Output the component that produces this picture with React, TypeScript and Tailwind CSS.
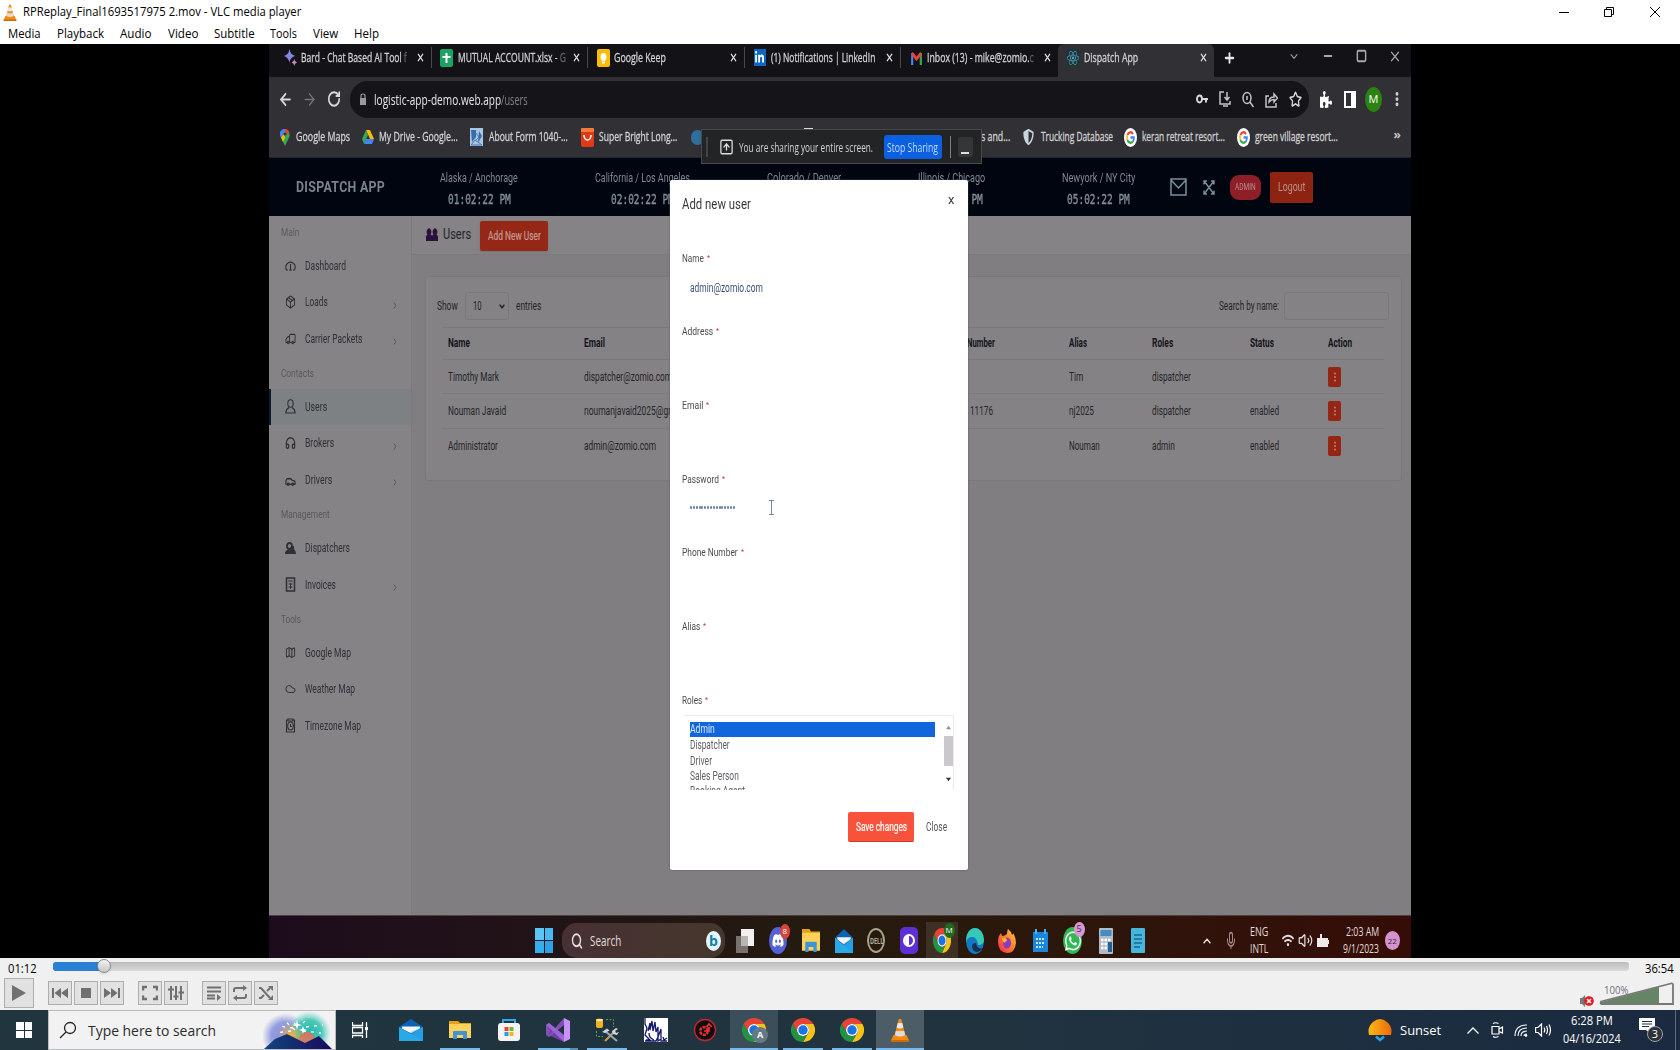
import React, { useLayoutEffect, useRef } from "react";
import {
  Gauge, Package, Truck, Headphones, Car, ChevronRight, ChevronDown,
  ChevronUp, ArrowLeft, ArrowRight, RotateCw, Star, X, Minus, Plus, Square, Search, Mic,
  Volume2, EllipsisVertical, SquareArrowUp, Map, Cloud,
} from "lucide-react";
import { FaPuzzlePiece, FaDiscord, FaWhatsapp, FaWifi, FaReact, FaLinkedinIn, FaShieldAlt, FaFirefoxBrowser } from "react-icons/fa";

/* Text squeezed or stretched horizontally to fill the width of its box. */
function Fit({ c = "", children }: { c?: string; children: React.ReactNode }) {
  const box = useRef<HTMLDivElement>(null);
  const txt = useRef<HTMLSpanElement>(null);
  useLayoutEffect(() => {
    if (box.current && txt.current && txt.current.offsetWidth) {
      txt.current.style.transform = `scaleX(${box.current.clientWidth / txt.current.offsetWidth})`;
    }
  });
  return (
    <div ref={box} className={"shrink-0 whitespace-nowrap " + c}>
      <span ref={txt} className="inline-block origin-left">{children}</span>
    </div>
  );
}

const stretch = { preserveAspectRatio: "none" };

function Chrome({ c }: { c: string }) {
  const d = "M1.6 6A12 12 0 0 1 22.4 6L12 6A6 6 0 0 0 6.8 15Z";
  return (
    <svg viewBox="0 0 24 24" className={c} preserveAspectRatio="none">
      <path d={d} fill="#ea4335" />
      <path d={d} fill="#fbc116" transform="rotate(120 12 12)" />
      <path d={d} fill="#229342" transform="rotate(240 12 12)" />
      <circle cx="12" cy="12" r="6" fill="#fff" />
      <circle cx="12" cy="12" r="4.7" fill="#1a73e8" />
    </svg>
  );
}

function Cone({ c }: { c: string }) {
  return (
    <svg viewBox="0 0 24 24" className={c} preserveAspectRatio="none">
      <path d="M4 17H20L23 23H1Z" fill="#f08a10" />
      <path d="M1 22H23V24H1Z" fill="#c96a06" />
      <path d="M10.5 1H13.5L19 19Q12 23 5 19Z" fill="#f58a14" />
      <path d="M9.3 5H14.7L16 9.5Q12 11.3 8 9.5Z" fill="#e9e9e9" />
      <path d="M7 13H17L18.3 17Q12 20 5.7 17Z" fill="#dcdcdc" />
    </svg>
  );
}

function Envelope({ c }: { c: string }) {
  return (
    <svg viewBox="0 0 24 22" className={c} preserveAspectRatio="none">
      <path d="M0 8L12 0L24 8V12H0Z" fill="#0a63b5" />
      <path d="M0 8L12 15L24 8V22H0Z" fill="#2aa9ea" />
      <path d="M3 7.500H21V9.500L12 14.500L3 9.500Z" fill="#f4f6f8" />
      <path d="M24 22L10 13.500L24 8Z" fill="#1490df" opacity=".35" />
    </svg>
  );
}

function Folder({ c }: { c: string }) {
  return (
    <svg viewBox="0 0 22 18" className={c} preserveAspectRatio="none">
      <path d="M0 0H9L11 2H22V8H0Z" fill="#e2a30c" />
      <path d="M0 3H22V17H0Z" fill="#ffd05a" />
      <path d="M4 18V11Q4 10 5 10H17Q18 10 18 11V18H14V14H8V18Z" fill="#3e94d8" />
    </svg>
  );
}

function GoogleG() {
  return (
    <svg viewBox="0 0 24 24" className="h-[19px] w-[13px] shrink-0" preserveAspectRatio="none">
      <circle cx="12" cy="12" r="12" fill="#fff" />
      <g fill="none" strokeWidth="3">
        <path d="M16.8 7.5A6.5 6.5 0 0 0 6.2 9" stroke="#ea4335" />
        <path d="M6.2 9A6.5 6.5 0 0 0 6.2 15" stroke="#fbbc05" />
        <path d="M6.2 15A6.5 6.5 0 0 0 16.4 17" stroke="#34a853" />
        <path d="M16.4 17A6.5 6.5 0 0 0 18.4 12H12" stroke="#4285f4" />
      </g>
    </svg>
  );
}

function TabItem({ icon, label, active, lead }: { icon: React.ReactNode; label: React.ReactNode; active?: boolean; lead?: boolean }) {
  return (
    <div className={"flex h-[33px] w-[156.5px] shrink-0 items-center pl-2 pr-[6px] pb-1.5 " + (active ? "rounded-t-md bg-[#313034]" : "")}>
      <div className="flex w-[14px] shrink-0 items-center justify-center">{icon}</div>
      <div className="ml-[4px] flex-1 overflow-hidden">{label}</div>
      <X className="h-[13px] w-[9px] shrink-0 text-[#e4e4e6]" strokeWidth={3} {...stretch} />
      {!active && !lead && <div className="ml-[6px] -mr-[6px] h-[21px] w-px shrink-0 bg-[#48474b]" />}
    </div>
  );
}

function BrowserTabs() {
  const t = "h-[18px] text-[12.5px] leading-[18px] text-[#d2d2d5] [-webkit-text-stroke:0.3px_#d2d2d5] ";
  return (
    <div className="flex h-[33px] items-start bg-[#131217] pl-[6px]">
      <TabItem
        icon={<svg viewBox="0 0 24 24" className="h-[17px] w-[13px]" preserveAspectRatio="none"><path d="M10 0Q11.500 8 20 10Q11.500 12 10 20Q8.500 12 0 10Q8.500 8 10 0Z" fill="#8a83d8" /><path d="M10 0Q11.500 8 20 10H10Z" fill="#6d92e6" /><path d="M19 14Q19.5 18 24 19Q19.500 20 19 24Q18.500 20 14 19Q18.500 18 19 14Z" fill="#c58bc0" /></svg>}
        label={<Fit c={t + "w-[106px]"}>Bard - Chat Based AI Tool <span className="opacity-40">f</span></Fit>}
      />
      <TabItem
        icon={<svg viewBox="0 0 13 18" className="h-[18px] w-[13px]"><rect width="13" height="18" rx="2" fill="#1ca261" /><path d="M6.5 4V14M2.5 8H10.5" stroke="#fff" strokeWidth="2" /></svg>}
        label={<Fit c={t + "w-[108px]"}>MUTUAL ACCOUNT.xlsx - <span className="opacity-40">G</span></Fit>}
      />
      <TabItem
        icon={<svg viewBox="0 0 13 18" className="h-[18px] w-[13px]"><rect width="13" height="18" rx="2" fill="#fbbc04" /><ellipse cx="6.5" cy="8" rx="3" ry="4" fill="#fff" /><rect x="5" y="12.5" width="3" height="2" fill="#fff" /></svg>}
        label={<Fit c={t + "w-[52px]"}>Google Keep</Fit>}
      />
      <TabItem
        icon={<div className="flex h-[17px] w-[12px] items-center justify-center bg-[#0a66c2]"><FaLinkedinIn className="h-[13px] w-[9px] text-white" {...stretch} /></div>}
        label={<Fit c={t + "w-[104px]"}>(1) Notifications | LinkedIn</Fit>}
      />
      <TabItem
        lead
        icon={<svg viewBox="0 0 12 14" className="h-[14px] w-[11px]" preserveAspectRatio="none"><path d="M1.3 14V2" stroke="#4285f4" strokeWidth="2.4" /><path d="M10.7 14V2" stroke="#34a853" strokeWidth="2.4" /><path d="M1 2L6 8L11 2" fill="none" stroke="#ea4335" strokeWidth="2.8" /></svg>}
        label={<Fit c={t + "w-[107px]"}>Inbox (13) - mike@zomio.<span className="opacity-40">c</span></Fit>}
      />
      <TabItem active icon={<div className="flex h-[17px] w-3 items-center justify-center bg-[#20323a]"><FaReact className="h-4 w-3 text-[#4fa9b8]" {...stretch} /></div>} label={<Fit c={t + "w-[54px]"}>Dispatch App</Fit>} />
      <div className="flex h-7 flex-1 items-center text-[#a8a8ab]">
        <Plus className="ml-[9px] h-[16px] w-[13px] text-[#e8e8ea]" strokeWidth={3.4} {...stretch} />
        <ChevronDown className="ml-[52px] mb-1 h-[15px] w-3" {...stretch} />
        <Minus className="mb-1 ml-[22px] h-[16px] w-3" strokeWidth={3} {...stretch} />
        <Square className="mb-1 ml-[22px] h-[14px] w-[11px]" strokeWidth={3.2} {...stretch} />
        <X className="mb-1 ml-[21px] h-[17px] w-[14px]" {...stretch} />
      </div>
    </div>
  );
}

function Toolbar() {
  const o = { fill: "none", stroke: "#c4c4c7", strokeWidth: 1.5 };
  return (
    <div className="flex h-[44px] items-center bg-[#313034] text-[#dadadc]">
      <ArrowLeft className="ml-[9px] h-[19px] w-[15px] shrink-0" strokeWidth={2.6} {...stretch} />
      <ArrowRight className="ml-[9px] h-[19px] w-[15px] shrink-0 text-[#77767a]" {...stretch} />
      <RotateCw className="ml-[10px] h-[18px] w-[14px] shrink-0" strokeWidth={2.8} {...stretch} />
      <div className="ml-[9px] flex h-[37px] w-[959px] shrink-0 items-center rounded-[18px] bg-[#151419] pl-[9px]">
        <svg viewBox="0 0 8 13" className="h-[13px] w-2"><path d="M1 5H7V12H1Z" fill="#9a9a9e" /><path d="M2 5V3Q2 1 4 1Q6 1 6 3V5" fill="none" stroke="#9a9a9e" strokeWidth="1.200" /></svg>
        <Fit c="mt-[2px] ml-[7px] h-5 w-[127px] text-[14px] leading-5 text-[#e6e6e8]">logistic-app-demo.web.app</Fit>
        <Fit c="mt-[2px] h-5 w-[27px] text-[14px] leading-5 text-[#828186]">/users</Fit>
        <div className="ml-auto mr-[7px] flex items-center gap-[11px]">
          <svg viewBox="0 0 12 10" className="h-[10px] w-3"><ellipse cx="3.500" cy="5" rx="2.500" ry="3.500" fill="none" stroke="#dadadc" strokeWidth="1.900" /><path d="M6 5H12M10 5V8.500" stroke="#dadadc" strokeWidth="2" fill="none" /></svg>
          <svg viewBox="0 0 12 16" className="h-4 w-3"><path d="M5 1H1V13H11V10M4 15H9M8 1V8M5.500 6L8 9L10.500 6" {...o} /></svg>
          <svg viewBox="0 0 12 17" className="h-[17px] w-3"><ellipse cx="5" cy="7" rx="4" ry="5.500" {...o} /><path d="M8 11L11.500 16M5 5V9" {...o} /></svg>
          <svg viewBox="0 0 13 17" className="h-[17px] w-[13px]"><path d="M4 5H1V16H11V12M4 11Q4 6 9 6V3L12.500 7L9 11V8.500Q6 8.500 4 11Z" {...o} /></svg>
          <Star className="h-[17px] w-[13px]" strokeWidth={2.4} {...stretch} />
        </div>
      </div>
      <FaPuzzlePiece className="ml-[11px] h-[17px] w-[12px] shrink-0 text-white" {...stretch} />
      <div className="ml-3 h-[17px] w-[12px] shrink-0 border-2 border-r-[5px] border-white" />
      <div className="ml-[9px] flex h-[25px] w-[17px] shrink-0 items-center justify-center rounded-[50%] bg-[#2c8212] text-[11px] text-white">M</div>
      <EllipsisVertical className="ml-[8px] h-[18px] w-[14px]" strokeWidth={3} {...stretch} />
    </div>
  );
}

function Bookmarks() {
  const t = "h-[18px] text-[12.5px] leading-[18px] text-[#d2d2d5] [-webkit-text-stroke:0.3px_#d2d2d5] ";
  return (
    <div className="flex h-[36px] items-center bg-[#313034] pb-[4px]">
      <svg viewBox="0 0 10 17" className="ml-[11px] h-[17px] w-[10px]"><path d="M5 17L1 8.5A4.6 4.8 0 1 1 9 8.5Z" fill="#34a853" /><path d="M1 8A4.6 4.8 0 0 1 5 0V5Z" fill="#4285f4" /><path d="M5 0A4.6 4.8 0 0 1 9.4 4L5 6Z" fill="#ea4335" /><path d="M1 8.5L4 5L5 9L3 13Z" fill="#fbbc04" /><circle cx="5" cy="5" r="1.5" fill="#333" /></svg>
      <Fit c={t + "ml-[6px] w-[54px]"}>Google Maps</Fit>
      <svg viewBox="0 0 12 14" className="ml-[12px] h-[14px] w-[12px]"><path d="M4 0H8L12 9H8Z" fill="#fbbc04" /><path d="M4 0L0 9L2 14L6 5Z" fill="#34a853" /><path d="M4 9H12L10 14H2Z" fill="#4285f4" /></svg>
      <Fit c={t + "ml-[5px] w-[79px]"}>My Drive - Google...</Fit>
      <svg viewBox="0 0 13 18" className="ml-[12px] h-[18px] w-[13px]"><rect width="13" height="18" fill="#a9c6e2" /><path d="M1 2H6V9L2 14ZM9 3L12 8L8 15Z" fill="#3a6da8" /><path d="M1 17L5 12L12 17ZM6 5L9 9L6 12" stroke="#497bb2" fill="none" /></svg>
      <Fit c={t + "ml-[6px] w-[79px]"}>About Form 1040-...</Fit>
      <svg viewBox="0 0 13 19" className="ml-[13px] h-[19px] w-[13px]"><rect width="13" height="19" rx="2" fill="#e23a14" /><rect width="13" height="4" rx="1" fill="#f27c3a" /><path d="M3 7A3.5 5 0 0 0 10 7" stroke="#fff" strokeWidth="1.6" fill="none" /></svg>
      <Fit c={t + "ml-[5px] w-[78px]"}>Super Bright Long...</Fit>
      <div className="ml-[14px] h-[15px] w-[13px] rounded-full bg-[#2f6f9c]" />
      <Fit c={t + "ml-[277px] w-[29px]"}>s and...</Fit>
      <FaShieldAlt className="ml-[13px] h-[16px] w-[11px] text-[#c9d5de]" {...stretch} />
      <Fit c={t + "ml-[7px] w-[72px]"}>Trucking Database</Fit>
      <div className="ml-[11px]"><GoogleG /></div>
      <Fit c={t + "ml-[5px] w-[83px]"}>keran retreat resort...</Fit>
      <div className="ml-[12px]"><GoogleG /></div>
      <Fit c={t + "ml-[5px] w-[83px]"}>green village resort...</Fit>
      <span className="ml-auto mr-[10px] pb-1 text-[12px] font-bold text-[#c4c4c7]">»</span>
    </div>
  );
}

function Zone({ c, name, nameW, time }: { c: string; name: string; nameW: string; time: string }) {
  return (
    <div className={"flex shrink-0 flex-col items-center " + c}>
      <Fit c={"mt-[2px] h-[18px] text-[12px] leading-[18px] text-[#7d8a94] " + nameW}>{name}</Fit>
      <Fit c="mt-[3px] h-[18px] w-[63px] font-['DejaVu_Sans_Mono',monospace] text-[14px] leading-[18px] text-[#7f8c94] [-webkit-text-stroke:0.4px_#7f8c94]">{time}</Fit>
    </div>
  );
}

function AppHeader() {
  return (
    <div className="flex h-[59px] items-center border-t border-[#1d2830] bg-[#000510]">
      <Fit c="ml-[27px] h-5 w-[89px] text-[15px] font-bold leading-5 tracking-wide text-[#79838b]">DISPATCH APP</Fit>
      <Zone c="ml-[34px] w-[120px]" name="Alaska / Anchorage" nameW="w-[78px]" time="01:02:22 PM" />
      <Zone c="ml-[43px] w-[120px]" name="California / Los Angeles" nameW="w-[95px]" time="02:02:22 PM" />
      <Zone c="ml-[42px] w-[120px]" name="Colorado / Denver" nameW="w-[74px]" time="03:02:22 PM" />
      <Zone c="ml-[27px] w-[120px]" name="Illinois / Chicago" nameW="w-[67px]" time="04:02:22 PM" />
      <Zone c="ml-[27px] w-[120px]" name="Newyork / NY City" nameW="w-[73px]" time="05:02:22 PM" />
      <svg viewBox="0 0 17 18" className="ml-[12px] h-[18px] w-[17px] shrink-0"><path d="M1 1H16V17H1ZM1 2L8.500 10L16 2" fill="none" stroke="#78909c" strokeWidth="1.500" /></svg>
      <svg viewBox="0 0 12 15" className="ml-[16px] h-[15px] w-[12px] shrink-0"><path d="M1 4.500V1H4M8 1H11V4.500M11 10.500V14H8M4 14H1V10.500M1.500 1.500L10.500 13.500M10.500 1.500L1.500 13.500" fill="none" stroke="#78909c" strokeWidth="1.400" /></svg>
      <div className="ml-[15px] flex h-[25px] w-[31px] shrink-0 items-center justify-center rounded-[9px] bg-[#8f1f26]"><Fit c="h-3 w-[21px] text-[9px] leading-3 text-[#b98d92]">ADMIN</Fit></div>
      <div className="ml-[9px] flex h-[31px] w-[43px] shrink-0 items-center justify-center rounded-[2px] bg-[#8d2412]"><Fit c="h-4 w-[27px] text-[12px] leading-4 text-[#b99088]">Logout</Fit></div>
    </div>
  );
}

const ic = "h-[14px] w-[11px] shrink-0";
const line = { fill: "none", stroke: "currentColor", strokeWidth: 1.1 };
type Nav = { head?: string; w: string; label?: string; icon?: React.ReactNode; arrow?: boolean; on?: boolean };
const nav: Nav[] = [
  { head: "Main", w: "w-[18px]" },
  { label: "Dashboard", w: "w-[41px]", icon: <svg viewBox="0 0 11 10" className="h-[10px] w-[11px] shrink-0"><path d="M3 9H1.500Q-.5 4 3 2Q5.500 .3 8 2Q11.500 4 9.500 9H8M5.500 3V9M4 9H7" {...line} /></svg> },
  { label: "Loads", w: "w-[23px]", icon: <Package className={ic} {...stretch} />, arrow: true },
  { label: "Carrier Packets", w: "w-[57px]", icon: <Truck className={ic + " -scale-x-100"} {...stretch} />, arrow: true },
  { head: "Contacts", w: "w-[33px]" },
  { label: "Users", w: "w-[22px]", icon: <svg viewBox="0 0 11 15" className="h-[15px] w-[11px] shrink-0"><ellipse cx="5.500" cy="4.500" rx="2.700" ry="3.800" {...line} /><path d="M4 8.500Q1 10 .8 14H10.200Q10 10 7 8.500" {...line} /></svg>, on: true },
  { label: "Brokers", w: "w-[29px]", icon: <Headphones className={ic} strokeWidth={2.6} {...stretch} />, arrow: true },
  { label: "Drivers", w: "w-[27px]", icon: <Car className="mt-1 h-[13px] w-[11px] shrink-0" strokeWidth={2.6} {...stretch} />, arrow: true },
  { head: "Management", w: "w-[49px]" },
  { label: "Dispatchers", w: "w-[45px]", icon: <svg viewBox="0 0 11 13" className="h-[13px] w-[11px] shrink-0"><ellipse cx="4.500" cy="4" rx="2.500" ry="3" fill="none" stroke="currentColor" strokeWidth="1.800" /><path d="M0 12Q0 7.500 4.500 7.500L6.500 4H9V7Q11 9 11 12Z" fill="currentColor" /></svg> },
  { label: "Invoices", w: "w-[31px]", icon: <svg viewBox="0 0 11 15" className="h-[15px] w-[11px] shrink-0"><path d="M1.500 1H9.500V14H1.500Z" fill="none" stroke="currentColor" strokeWidth="1.500" /><path d="M3 4H8M3.500 7H7.500M5.500 6V12M3.500 10H7.500" stroke="currentColor" /></svg>, arrow: true },
  { head: "Tools", w: "w-[20px]" },
  { label: "Google Map", w: "w-[46px]", icon: <Map className="h-[13px] w-[11px] shrink-0" {...stretch} /> },
  { label: "Weather Map", w: "w-[50px]", icon: <Cloud className="h-[12px] w-[11px] shrink-0" {...stretch} /> },
  { label: "Timezone Map", w: "w-[56px]", icon: <svg viewBox="0 0 11 15" className="h-[15px] w-[11px] shrink-0"><path d="M3 2H1.500V14H9.500V2H8M3 1H8V3H3Z" {...line} /><ellipse cx="5.500" cy="8" rx="2.800" ry="4" {...line} /><path d="M5.500 6V8.500H7" {...line} /></svg> },
];

function Sidebar() {
  return (
    <div className="w-[143px] shrink-0 border-r border-[#7b797c] bg-[#858386]">
      {nav.map((n, i) =>
        n.head ? (
          <div key={i} className="flex h-[31.6px] items-center pl-3">
            <Fit c={"h-4 text-[11.5px] leading-4 text-[#5a595c] " + n.w}>{n.head}</Fit>
          </div>
        ) : (
          <div key={i} className={"flex h-[36.5px] items-center text-[#2e3036] " + (n.on ? "border-l-2 border-[#0c1d30] bg-[#7d8183] pl-[14px]" : "pl-4")}>
            {n.icon}
            <Fit c={"ml-[9px] h-[18px] text-[13px] leading-[18px] " + n.w}>{n.label}</Fit>
            {n.arrow && <ChevronRight className="ml-auto mr-[12px] mt-1.5 h-[11px] w-[8px] text-[#4c4c50]" {...stretch} />}
          </div>
        )
      )}
    </div>
  );
}

const rows = [
  [["Timothy Mark", "w-[51px]"], ["dispatcher@zomio.com", "w-[88px]"], ["", "w-0"], ["Tim", "w-[14px]"], ["dispatcher", "w-[39px]"], ["", "w-0"]],
  [["Nouman Javaid", "w-[58px]"], ["noumanjavaid2025@gmail.com", "w-[119px]"], ["11176", "ml-[27px] w-[23px]"], ["nj2025", "w-[25px]"], ["dispatcher", "w-[39px]"], ["enabled", "w-[29px]"]],
  [["Administrator", "w-[50px]"], ["admin@zomio.com", "w-[72px]"], ["", "w-0"], ["Nouman", "w-[31px]"], ["admin", "w-[23px]"], ["enabled", "w-[29px]"]],
];
const heads = [["Name", "w-[22px]"], ["Email", "w-[21px]"], ["Phone Number", "w-[52px]"], ["Alias", "w-[18px]"], ["Roles", "w-[21px]"], ["Status", "w-[24px]"], ["Action", "w-[24px]"]];
const grid = "grid grid-cols-[136px_359px_126px_83px_98px_78px_56px] items-center pl-[6px]";

function UsersPage() {
  return (
    <div className="flex-1 bg-[#807e81]">
      <div className="flex h-[39px] items-start border-b border-[#7b797c] bg-[#858386] pl-[14px]">
        <svg viewBox="0 0 12 14" className="mt-[11px] h-[14px] w-[12px]"><path d="M0 14V9L1.500 7.500A2.300 3.400 0 1 1 4.500 7.500L6 8.500L7.500 7.500A2.300 3.400 0 1 1 10.500 7.500L12 9V14Z" fill="#2a123c" /></svg>
        <Fit c="ml-[5px] mt-[8px] h-5 w-[28px] text-[15px] leading-5 text-[#242428]">Users</Fit>
        <div className="ml-[9px] mt-[5px] flex h-[30px] w-[68px] items-center justify-center rounded-[2px] bg-[#952716] shadow">
          <Fit c="h-4 w-[53px] text-[12px] leading-4 text-[#c39d96] [-webkit-text-stroke:0.2px_#c39d96]">Add New User</Fit>
        </div>
      </div>
      <div className="ml-[13px] mt-[21px] h-[205px] w-[977px] rounded-[3px] border border-[#7a787b] bg-[#848285] pt-[15px] text-[#252528]">
        <div className="flex h-[28px] items-center pl-[11px] text-[12px]">
          <Fit c="h-4 w-[21px] leading-4">Show</Fit>
          <div className="ml-[7px] flex h-[28px] w-[44px] items-center rounded-[3px] border border-[#7a787c] pl-[7px]">
            <Fit c="h-4 w-[9px] leading-4">10</Fit>
            <ChevronDown className="ml-auto mr-[2px] h-[11px] w-[8px]" strokeWidth={4} {...stretch} />
          </div>
          <Fit c="ml-[7px] h-4 w-[25px] leading-4">entries</Fit>
          <Fit c="ml-auto h-4 w-[60px] leading-4">Search by name:</Fit>
          <div className="ml-[5px] mr-[12px] h-[28px] w-[105px] rounded-[3px] border border-[#7a787c]" />
        </div>
        <div className="ml-4 mt-[7px] w-[942px]">
          <div className={grid + " h-[33px] border-y border-[#7a787c] pb-[2px]"}>
            {heads.map(([h, w]) => <Fit key={h} c={"h-4 text-[12px] font-bold leading-4 text-[#141417] " + w}>{h}</Fit>)}
          </div>
          {rows.map((r, i) => (
            <div key={i} className={grid + " h-[34.3px] " + (i < 2 ? "border-b border-[#7c7a7d]" : "")}>
              {r.map(([v, w], j) => <Fit key={j} c={"h-4 text-[12.5px] leading-4 " + w}>{v}</Fit>)}
              <div className="flex h-[20px] w-[13px] items-center justify-center rounded-[2px] bg-[#952614]"><EllipsisVertical className="h-[12px] w-[8px] text-[#c79a90]" strokeWidth={2.5} {...stretch} /></div>
            </div>
          ))}
        </div>
      </div>
    </div>
  );
}

function Slot({ children, on }: { children: React.ReactNode; on?: boolean }) {
  return <div className={"relative flex h-[38px] w-[32.75px] shrink-0 items-center justify-center " + (on ? "bg-white/10" : "")}>{children}</div>;
}

function InnerTaskbar() {
  return (
    <div className="flex h-[43px] items-center border-t border-[#4b4240] bg-linear-to-r from-[#1d0c1c] via-[#251b0e] via-50% to-[#350c07] pt-[7px] text-[#e3dcda]">
      <div className="ml-[266px] grid h-[25px] w-[18px] shrink-0 grid-cols-2 gap-px">
        <div className="bg-[#59c6f5]" /><div className="bg-[#47baf3]" /><div className="bg-[#36aeee]" /><div className="bg-[#2ba1ea]" />
      </div>
      <div className="ml-[9px] flex h-[35px] w-[163px] shrink-0 items-center rounded-[15px] bg-linear-to-r from-[#473034] to-[#45372c] pl-[9px]">
        <Search className="h-[18px] w-[12px]" strokeWidth={2.8} {...stretch} />
        <Fit c="ml-[7px] h-5 w-[31px] text-[14px] leading-5">Search</Fit>
        <div className="ml-auto mr-[4px] flex h-[20px] w-[15px] items-center justify-center rounded-[50%] bg-[#e5f5fb] text-[14px] font-bold text-[#0d80ad]">b</div>
      </div>
      <div className="ml-[4px] flex h-[34px] items-center">
        <Slot><svg viewBox="0 0 18 24" className="h-6 w-[18px]"><rect y="7" width="12" height="17" fill="#77726d" /><rect x="5" width="13" height="17" fill="#f3f1f0" /><rect x="5" y="7" width="7" height="10" fill="#b9b5b3" /></svg></Slot>
        <Slot>
          <div className="flex h-[27px] w-[18px] items-center justify-center rounded-[50%] bg-[#5462d8]"><FaDiscord className="h-[15px] w-[12px] text-white" {...stretch} /></div>
          <div className="absolute left-[18px] top-[2px] flex h-[15px] w-[10px] items-center justify-center rounded-[50%] bg-[#d7443c] text-[8px] text-white">8</div>
        </Slot>
        <Slot><Folder c="h-[23px] w-[18px]" /></Slot>
        <Slot><Envelope c="h-[24px] w-[18px]" /></Slot>
        <Slot><div className="flex h-[25px] w-[18px] items-center justify-center rounded-[50%] border-2 border-[#aaa28f]"><Fit c="h-2 w-[13px] text-[8px] font-bold leading-2 text-[#b5ad9c]">DELL</Fit></div></Slot>
        <Slot><svg viewBox="0 0 18 27" className="h-[27px] w-[18px]"><rect width="18" height="27" rx="5" fill="#5d2fd4" /><ellipse cx="9" cy="13.500" rx="5" ry="5.500" fill="none" stroke="#fff" strokeWidth="2" /><path d="M9 8V19A4 5.500 0 0 1 9 8Z" fill="#fff" /></svg></Slot>
        <Slot on>
          <Chrome c="h-[25px] w-[18px]" />
          <div className="absolute left-[18px] top-[1px] flex h-[15px] w-[11px] items-center justify-center rounded-[50%] bg-[#1f6a1b] text-[8px] text-white">M</div>
        </Slot>
        <Slot><svg viewBox="0 0 18 26" className="h-[26px] w-[18px]"><ellipse cx="9" cy="13" rx="9" ry="13" fill="#1479c5" /><path d="M0 12A9 12 0 0 1 18 12Q18 17 12 17Q11 8 5 9Q1 10 0 14Z" fill="#38c9b5" /><path d="M10 15Q11 22 17 20Q11 27 7 22Q4 15 10 15Z" fill="#16324e" /></svg></Slot>
        <Slot>
          <svg viewBox="0 0 18 26" className="h-[26px] w-[18px]"><defs><linearGradient id="ff" x1="1" y1="0" x2="0" y2="1"><stop stopColor="#ffd23e" /><stop offset=".5" stopColor="#ff7a2a" /><stop offset="1" stopColor="#f0245c" /></linearGradient></defs><path d="M10 1Q13 3 14 7L15.500 5.500Q18 10 18 15Q17 25 9 25Q0 24 0 14Q0 8 3 5L4 8Q7 8 9 6Q9 3 10 1Z" fill="url(#ff)" /><ellipse cx="9" cy="15" rx="4" ry="5.500" fill="#8b3bc0" /><path d="M4 10Q9 9 9 13Q7 13 7 15Q4 14 4 10Z" fill="#ffae35" /></svg>
        </Slot>
        <Slot><svg viewBox="0 0 15 24" className="h-6 w-[15px]"><path d="M0 3H15V23H0Z" fill="#1a86dd" /><path d="M3 0V5M12 0V5" stroke="#49b1f3" strokeWidth="2" /><path d="M3 10H12M3 14H12M3 18H10" stroke="#bfe5fb" strokeWidth="2" strokeDasharray="2 1" /></svg></Slot>
        <Slot>
          <div className="flex h-[27px] w-[19px] items-center justify-center rounded-[50%] bg-[#2fb853]"><FaWhatsapp className="h-[22px] w-[16px] text-white" {...stretch} /></div>
          <div className="absolute left-[17px] top-0 flex h-[15px] w-[11px] items-center justify-center rounded-[50%] bg-[#d899d3] text-[9px] text-[#4d264b]">5</div>
        </Slot>
        <Slot><svg viewBox="0 0 14 26" className="h-[26px] w-[14px]"><rect width="14" height="26" rx="1" fill="#b2bcc8" /><rect x="1.500" y="2" width="11" height="6" fill="#438cc4" /><path d="M2 12H12M2 16H12M2 20H12" stroke="#fff" strokeWidth="2.500" strokeDasharray="2.500 1" /><rect x="9" y="14" width="4" height="10" fill="#255f98" /></svg></Slot>
        <Slot><svg viewBox="0 0 14 25" className="h-[25px] w-[14px]"><rect width="14" height="25" rx="1" fill="#48b6dc" /><path d="M3 7H11M3 11H11M3 15H11M3 19H9" stroke="#15688e" strokeWidth="1.500" /></svg></Slot>
      </div>
      <ChevronUp className="ml-[46px] h-[14px] w-[12px] shrink-0" strokeWidth={3} {...stretch} />
      <Mic className="ml-[12px] h-[19px] w-[12px] shrink-0 text-[#ac8390]" {...stretch} />
      <div className="ml-[13px] flex w-[19px] flex-col items-center gap-px text-[12px]"><Fit c="h-4 w-[18px] leading-4">ENG</Fit><Fit c="h-4 w-[18px] leading-4">INTL</Fit></div>
      <FaWifi className="ml-[13px] h-[13px] w-[12px] shrink-0" {...stretch} />
      <Volume2 className="ml-[4px] h-[17px] w-[15px] shrink-0" {...stretch} />
      <svg viewBox="0 0 12 14" className="ml-[4px] h-[14px] w-[12px] shrink-0"><path d="M0 4H3V0H5V4H11V6H12V10H11V13H0Z" fill="#efe9e8" /></svg>
      <div className="ml-[14px] flex w-[36px] flex-col items-end gap-px text-[12px]"><Fit c="h-4 w-[33px] leading-4">2:03 AM</Fit><Fit c="h-4 w-[36px] leading-4">9/1/2023</Fit></div>
      <div className="ml-[6px] flex h-[19px] w-[15px] shrink-0 items-center justify-center rounded-[50%] bg-[#d492cf] text-[8px] text-[#3f1d3c]">22</div>
    </div>
  );
}

const fields = [
  ["Name", "w-[22px]", "admin"], ["Address", "w-[31px]", ""], ["Email", "w-[21px]", ""], ["Password", "w-[37px]", "pw"],
  ["Phone Number", "w-[56px]", ""], ["Alias", "w-[18px]", ""],
];

function FieldLabel({ w, children }: { w: string; children: string }) {
  return (
    <div className="flex h-4 items-center">
      <Fit c={"h-4 text-[11.5px] leading-4 text-[#4c4c50] " + w}>{children}</Fit>
      <span className="ml-[3px] text-[7px] leading-3 text-[#c22f3d]">*</span>
    </div>
  );
}

function Modal() {
  return (
    <div className="absolute left-[401px] top-[136px] h-[690px] w-[297.500px] rounded-[2px] bg-white shadow-[0_0_2px_#555]">
      <div className="flex items-center justify-between pl-3 pr-[13px] pt-[12px]">
        <Fit c="h-6 w-[69px] text-[15px] leading-6 text-[#39393d]">Add new user</Fit>
        <span className="mb-2 text-[13px] leading-4 text-[#3d3d40]">x</span>
      </div>
      <div className="mt-[33.500px] pl-3">
        {fields.map(([l, w, v]) => (
          <div key={l} className="h-[73.700px]">
            <FieldLabel w={w}>{l}</FieldLabel>
            {v === "admin" && <Fit c="ml-[8px] mt-[14px] h-4 w-[73px] text-[12px] leading-4 text-[#3b5076]">admin@zomio.com</Fit>}
            {v === "pw" && (
              <div className="ml-[8px] mt-[13px] flex h-4 items-center">
                <div className="flex w-[45px] justify-between">{Array.from({ length: 16 }, (_, i) => <i key={i} className="h-[3px] w-[2px] rounded-full bg-[#6a84aa]" />)}</div>
                <svg viewBox="0 0 5 15" className="-mt-px ml-[34px] h-[15px] w-[5px]"><path d="M0 .5H5M0 14.500H5M2.500 0V15" stroke="#7789a8" /></svg>
              </div>
            )}
          </div>
        ))}
        <FieldLabel w="w-[20px]">Roles</FieldLabel>
        <div className="ml-[2px] mt-[7px] flex h-[75px] w-[270px] overflow-hidden border-t border-r border-[#ebebee] pl-[6px] pt-[6px]">
          <div className="w-[245px] shrink-0 text-[12px] text-[#606064]">
            <div className="h-[15.500px] bg-[#1166db]"><Fit c="h-4 w-[25px] leading-[15px] text-[#dbe9fc]">Admin</Fit></div>
            <Fit c="h-[15.400px] w-[40px] leading-4">Dispatcher</Fit>
            <Fit c="h-[15.400px] w-[22px] leading-4">Driver</Fit>
            <Fit c="h-[15.400px] w-[49px] leading-4">Sales Person</Fit>
            <Fit c="h-[15.400px] w-[55px] leading-4">Booking Agent</Fit>
          </div>
          <div className="ml-[9px] flex w-[9px] flex-col items-center">
            <svg viewBox="0 0 6 4" className="mt-[3px] h-[5px] w-[5px]"><path d="M0 4L3 0L6 4Z" fill="#919196" /></svg>
            <div className="mt-[6px] h-[30px] w-[9px] bg-[#cac8cc]" />
            <svg viewBox="0 0 6 4" className="mt-[11px] h-[5px] w-[5px]"><path d="M0 0L3 4L6 0Z" fill="#333" /></svg>
          </div>
        </div>
      </div>
      <div className="mt-[22.500px] flex items-center pl-[178px]">
        <div className="flex h-[30px] w-[66px] items-center justify-center rounded-[2px] border-b border-[#c23e29] bg-[#f9523a]"><Fit c="h-4 w-[51px] text-[12.500px] leading-4 text-white [-webkit-text-stroke:0.2px_white]">Save changes</Fit></div>
        <Fit c="ml-[12px] h-4 w-[21px] text-[12px] leading-4 text-[#58585c]">Close</Fit>
      </div>
    </div>
  );
}

function SharingBar() {
  return (
    <div className="absolute left-[431.500px] top-[85px] flex h-[35px] w-[281px] items-center border border-[#48494b] bg-[#222425] shadow">
      <div className="ml-[4px] h-[20px] w-[2px] bg-[#414345]" />
      <SquareArrowUp className="ml-[11px] h-[18px] w-[15px] text-[#dedee0]" {...stretch} />
      <Fit c="ml-[5px] h-5 w-[134px] text-[13px] leading-5 text-[#d4d4d6]">You are sharing your entire screen.</Fit>
      <div className="ml-[11px] flex h-[24px] w-[58px] items-center justify-center rounded-[3px] bg-[#0b60e2]"><Fit c="h-5 w-[51px] text-[13px] leading-5 text-[#c1dbfc]">Stop Sharing</Fit></div>
      <div className="ml-[8px] h-[22px] w-px bg-[#7e7f81]" />
      <div className="ml-[7px] flex h-[20px] w-[15px] items-end justify-center rounded-[2px] bg-[#343638] pb-[3px]"><div className="h-[2px] w-[8px] bg-[#dededf]" /></div>
    </div>
  );
}

function Video() {
  return (
    <div className="flex h-[914px] justify-center overflow-hidden bg-black">
      <div className="relative flex h-[914px] w-[1142px] flex-col overflow-hidden font-['Roboto',sans-serif] blur-[0.5px]">
        <div className="font-['Open_Sans','Noto_Sans',sans-serif]"><BrowserTabs /><Toolbar /><Bookmarks /></div>
        <AppHeader />
        <div className="flex min-h-0 flex-1"><Sidebar /><UsersPage /></div>
        <div className="font-['Open_Sans','Noto_Sans',sans-serif]"><InnerTaskbar /></div>
        <div className="absolute left-[535px] top-[84px] h-[2px] w-[9px] bg-[#dcdcde]" />
        <div className="font-['Open_Sans','Noto_Sans',sans-serif]"><SharingBar /></div>
        <Modal />
      </div>
    </div>
  );
}

function Btn({ c = "", children }: { c?: string; children: React.ReactNode }) {
  return <div className={"flex h-6 w-6 shrink-0 items-center justify-center border border-[#adadad] bg-[#e1e1e1] " + c}>{children}</div>;
}

function VlcControls() {
  const s = "h-[16px] w-[16px]";
  return (
    <div className="h-[52px] bg-[#f0f0f0]">
      <div className="flex h-[20px] items-center">
        <Fit c="ml-2 mt-px h-4 w-[29px] text-[12px] leading-4">01:12</Fit>
        <div className="relative mb-[3px] ml-4 h-[9px] w-[1576px] rounded-[3px] bg-linear-to-b from-[#bcbcbc] to-[#dadada]">
          <div className="h-[9px] w-[50px] rounded-l-[3px] bg-[#2a80d2]" />
          <div className="absolute left-[44px] -top-[3px] h-[14px] w-[14px] rounded-full border border-[#898989] bg-linear-to-b from-[#f2f2f2] to-[#c6c6c6] shadow-sm" />
        </div>
        <Fit c="ml-4 mt-px h-4 w-[29px] text-[12px] leading-4">36:54</Fit>
      </div>
      <div className="flex h-[30px] items-center pl-1">
        <Btn c="h-[30px]! w-[30px]!"><svg viewBox="0 0 14 16" className="h-4 w-[14px]"><path d="M0 0L14 8L0 16Z" fill="#707070" /></svg></Btn>
        <Btn c="ml-[14px]"><svg viewBox="0 0 16 16" className={s}><path d="M0 3H2V13H0ZM9 3V13L2.500 8ZM16 3V13L9 8Z" fill="#707070" /></svg></Btn>
        <Btn c="ml-[2px]"><svg viewBox="0 0 10 10" className="h-[10px] w-[10px]"><path d="M0 0H10V10H0Z" fill="#707070" /></svg></Btn>
        <Btn c="ml-[2px]"><svg viewBox="0 0 16 16" className={s}><path d="M14 3H16V13H14ZM7 3V13L13.500 8ZM0 3V13L7 8Z" fill="#707070" /></svg></Btn>
        <Btn c="ml-[14px]"><svg viewBox="0 0 16 16" className={s}><path d="M1 5.500V2H5M11 2H15V5.500M15 10.500V14H11M5 14H1V10.500" fill="none" stroke="#707070" strokeWidth="2.400" /></svg></Btn>
        <Btn c="ml-[2px]"><svg viewBox="0 0 16 16" className={s}><path d="M3 1V15M8 1V15M13 1V15M0 4.500H6M5.500 11.500H10.500M10.500 7.500H16" fill="none" stroke="#707070" strokeWidth="2" /></svg></Btn>
        <Btn c="ml-[14px]"><svg viewBox="0 0 16 16" className={s}><path d="M1 2.500H15M1 6.500H15M1 10.500H9M1 13.500H9" stroke="#707070" strokeWidth="1.800" /><path d="M11 9L15 12.500L11 16Z" fill="#707070" /></svg></Btn>
        <Btn c="ml-[2px]"><svg viewBox="0 0 16 16" className={s}><path d="M2 7V5Q2 3 4 3H12M14 9V11Q14 13 12 13H4" fill="none" stroke="#707070" strokeWidth="2" /><path d="M11 0L15 3L11 6ZM5 10L1 13L5 16Z" fill="#707070" /></svg></Btn>
        <Btn c="ml-[2px]"><svg viewBox="0 0 16 16" className={s}><path d="M1 3H3L12 13M1 13H3L6 10M9 6L12 3" fill="none" stroke="#707070" strokeWidth="2" /><path d="M10 1H15V6ZM15 10V15H10Z" fill="#707070" /></svg></Btn>
        <svg viewBox="0 0 14 12" className="ml-auto mt-[15px] h-3 w-[14px]"><path d="M0 3H2L5 0V12L2 9H0Z" fill="#777" /><circle cx="9" cy="6" r="4.800" fill="#e8151b" /><path d="M7 4L11 8M11 4L7 8" stroke="#fff" strokeWidth="1.600" /></svg>
        <div className="relative ml-[5px] mr-[5px] h-[26px] w-[76px]">
          <svg viewBox="0 0 76 24" className="absolute bottom-0 left-0 h-6 w-[76px]"><path d="M2 20L60 5V21H2Z" fill="#668466" /><path d="M2 19.500L72 1.500Q74 1 74 3V22H3Q1 22 2 19.500Z" fill="none" stroke="#777" strokeWidth="1.800" /></svg>
          <Fit c="absolute left-[5px] top-[4px] h-3 w-[24px] text-[10px] leading-3 text-[#707070]">100%</Fit>
        </div>
      </div>
    </div>
  );
}

function Fireworks() {
  return (
    <svg viewBox="0 0 70 38" className="ml-auto mr-[2px] h-[38px] w-[70px] shrink-0">
      <defs>
        <radialGradient id="fwA"><stop offset="0" stopColor="#8a8fdb" /><stop offset=".6" stopColor="#7d88d8" stopOpacity=".8" /><stop offset="1" stopColor="#8a96e0" stopOpacity="0" /></radialGradient>
        <radialGradient id="fwB"><stop offset="0" stopColor="#21b5a6" /><stop offset=".6" stopColor="#2fc1b0" stopOpacity=".85" /><stop offset="1" stopColor="#6fd6cd" stopOpacity="0" /></radialGradient>
        <radialGradient id="fwC"><stop offset="0" stopColor="#ffb22e" /><stop offset="1" stopColor="#ffb22e" stopOpacity="0" /></radialGradient>
        <linearGradient id="fwM"><stop stopColor="#12457f" /><stop offset="1" stopColor="#1a0a5c" /></linearGradient>
      </defs>
      <circle cx="22" cy="25" r="23" fill="url(#fwA)" /><circle cx="46" cy="22" r="22" fill="url(#fwB)" />
      <circle cx="28" cy="25" r="13" fill="url(#fwC)" /><circle cx="44" cy="29" r="8" fill="#f66c51" opacity=".8" />
      <path d="M33 14L28 8M40 12L46 6M43 16L60 14M30 17L16 15M28 20L12 22M40 20L58 22M32 19L22 10" stroke="#fff" strokeWidth="1.300" strokeDasharray="3 5" />
      <path d="M34 9L35 13L39 14L35 15L34 19L33 15L29 14L33 13ZM40 15L41 18L44 19L41 20L40 23L39 20L36 19L39 18Z" fill="#fff" />
      <path d="M1 38L12 28L24 23L42 32L56 25L69 38Z" fill="url(#fwM)" />
    </svg>
  );
}

function TaskApp({ c, bar, children }: { c: string; bar?: string; children: React.ReactNode }) {
  return (
    <div className={"flex h-10 shrink-0 flex-col items-center " + c}>
      <div className="relative flex flex-1 items-center">{children}</div>
      <div className={"-mt-[2px] h-[2px] shrink-0 " + (bar ?? "")} />
    </div>
  );
}

function Taskbar() {
  return (
    <div className="flex h-10 items-center bg-linear-to-r from-[#20353e] via-[#20333f] via-60% to-[#1b2a40] text-white">
      <div className="ml-4 grid h-4 w-4 shrink-0 grid-cols-2 gap-px"><i className="bg-white" /><i className="bg-white" /><i className="bg-white" /><i className="bg-white" /></div>
      <div className="ml-4 flex h-10 w-[288px] shrink-0 items-center border border-[#b9bcbd] bg-[#f2f2f2] pl-[10px] text-[#2c2c2c]">
        <svg viewBox="0 0 18 18" className="h-[18px] w-[18px]"><circle cx="11" cy="7" r="5.500" fill="none" stroke="#222" strokeWidth="1.300" /><path d="M7 11L1 17" stroke="#222" strokeWidth="1.300" /></svg>
        <Fit c="ml-[11px] h-6 w-[128px] text-[15px] leading-6">Type here to search</Fit>
        <Fireworks />
      </div>
      <svg viewBox="0 0 17 16" className="ml-4 h-4 w-[17px] shrink-0"><path d="M.5 0V3.500H10.500V0M.5 16V13.500H10.500V16M.5 5.500H10.500V11H.5ZM14.500 0V16" fill="none" stroke="#fff" strokeWidth="1.300" /><path d="M13 5H16V8H13Z" fill="#fff" /></svg>
      <div className="ml-[17px] flex">
        <TaskApp c="w-[49px]"><Envelope c="h-[22px] w-6" /></TaskApp>
        <TaskApp c="w-[49px]" bar="w-10 bg-[#76b9ed]"><Folder c="h-[18px] w-[22px]" /></TaskApp>
        <TaskApp c="w-[49px]"><svg viewBox="0 0 24 24" className="h-6 w-6"><path d="M6 6V2H18V6" fill="none" stroke="#31a8ea" strokeWidth="2" /><rect x="1" y="5" width="22" height="18" rx="3" fill="#f3f3f3" /><path d="M7.500 9H11.500V13H7.500Z" fill="#e8472e" /><path d="M12.500 9H16.500V13H12.500Z" fill="#78b42c" /><path d="M7.500 14H11.500V18H7.500Z" fill="#249fe2" /><path d="M12.500 14H16.500V18H12.500Z" fill="#f6b71c" /></svg></TaskApp>
        <TaskApp c="w-[49px]" bar="w-10 border-r-8 border-[#5a8db4] bg-[#76b9ed]"><svg viewBox="0 0 24 24" className="h-6 w-6"><path d="M0 7L3 5L18 18V24L2 17L0 16Z" fill="#6a419e" /><path d="M3 17L18 0L18 7L3 19L0 17V7L4 12Z" fill="#8450b8" /><path d="M18 0L24 3V21L18 24Z" fill="#c792fa" /><path d="M3 5L18 17V24L0 7Z" fill="#9b63d4" /></svg></TaskApp>
        <TaskApp c="w-[49px]" bar="w-10 bg-[#76b9ed]"><svg viewBox="0 0 24 24" className="h-6 w-6"><rect x="1" y="1" width="7" height="9" rx="2" fill="#f1b21f" /><ellipse cx="4.500" cy="2" rx="3.500" ry="1.300" fill="#ffe699" /><path d="M11 1.500H18.500V9M1.500 13V18.500H8" fill="none" stroke="#57a455" strokeDasharray="2 1.500" /><path d="M10 23L20 13" stroke="#c69b56" strokeWidth="2.200" /><path d="M10 13L22 23" stroke="#98a9b9" strokeWidth="2" /><path d="M7 14L12 10.500L14.500 12.500L10 15ZM17 13L21 10L23 11L20 13L21 15L24 14L22 17L18 16Z" fill="#d0d5da" /></svg></TaskApp>
        <TaskApp c="w-[49px]"><svg viewBox="0 0 24 24" className="h-6 w-6"><path fill="#fff" d="M0 0H24V24H0Z" /><path d="M1 0V6L3 10L1 17L6 22H2M1 23H12L14 19V23L17 21V23H23M4 13L6 5V12L8 3L9 13L11 4L12 14L14 9V19L17 11V21M5 15Q5 20 10 22M19 19L20 22L23 20" fill="none" stroke="#14176c" strokeWidth="1.300" /></svg></TaskApp>
        <TaskApp c="w-[49px]"><svg viewBox="0 0 24 24" className="h-6 w-6"><circle cx="12" cy="12" r="10.500" fill="#120d10" stroke="#c8252c" strokeWidth="1.300" /><circle cx="11" cy="13" r="3.800" fill="none" stroke="#e32f33" strokeWidth="2.500" strokeDasharray="3 1" /><path d="M11 13H16V9M13.500 9L16 6L19 9" fill="none" stroke="#ee3336" strokeWidth="1.600" /></svg></TaskApp>
        <TaskApp c="ml-px w-[48px] bg-[#3b4f5b]" bar="w-12 bg-[#76b9ed]"><Chrome c="h-6 w-6" /><div className="absolute left-[10px] top-[17px] flex h-[16px] w-[16px] items-center justify-center rounded-full bg-[#637984] text-[9px] font-bold">A</div></TaskApp>
        <TaskApp c="w-[49px]" bar="w-10 bg-[#76b9ed]"><Chrome c="h-6 w-6" /></TaskApp>
        <TaskApp c="w-[49px]" bar="w-10 bg-[#76b9ed]"><Chrome c="h-6 w-6" /></TaskApp>
        <TaskApp c="w-[48px] bg-[#4c5d68]" bar="w-12 bg-[#76b9ed]"><Cone c="h-6 w-[20px]" /></TaskApp>
      </div>
      <svg viewBox="0 0 24 24" className="ml-auto h-6 w-6 shrink-0"><defs><linearGradient id="sun"><stop stopColor="#fdb813" /><stop offset="1" stopColor="#ea6a0c" /></linearGradient></defs><path d="M1 17Q-1 9 5 4Q12-2 19 4Q25 9 23 17Z" fill="url(#sun)" /><path d="M8 18.500L12 22L16 18.500" fill="none" stroke="#29a1e9" strokeWidth="2.500" /></svg>
      <Fit c="ml-2 h-5 w-[41px] text-[13px] leading-5">Sunset</Fit>
      <svg viewBox="0 0 12 7" className="ml-[26px] h-[7px] w-3 shrink-0"><path d="M.5 6.500L6 1L11.500 6.500" fill="none" stroke="#fff" strokeWidth="1.300" /></svg>
      <svg viewBox="0 0 13 16" className="ml-[12px] h-4 w-[13px] shrink-0"><path d="M1 4.500H8V12H1ZM8 7L11.500 5V11L8 9.500M2 1.500Q4.500 0 7.500 1.500M2 14.500Q4.500 16 7.500 14.500" fill="none" stroke="#fff" strokeWidth="1.200" /></svg>
      <svg viewBox="0 0 14 14" className="ml-[10px] h-[14px] w-[14px] shrink-0"><path d="M1 13Q1 2 13 2M4 13Q4 5 13 5M7 13Q7 8 13 8M10 13Q10 11 13 11" fill="none" stroke="#e9edf0" strokeWidth="1.200" /><circle cx="12" cy="12.500" r="1.300" fill="#fff" /></svg>
      <svg viewBox="0 0 18 14" className="ml-[7px] h-[14px] w-[18px] shrink-0"><path d="M.6 4.500H3L6.500 1V13L3 9.500H.6ZM9 4.500Q10.500 7 9 9.500M11.500 3Q13.500 7 11.500 11M14 1.500Q17 7 14 12.500" fill="none" stroke="#fff" strokeWidth="1.200" /></svg>
      <div className="ml-[10px] flex w-[58px] shrink-0 flex-col items-center text-[12px]"><Fit c="h-[18px] w-[42px] leading-[18px]">6:28 PM</Fit><Fit c="h-[18px] w-[58px] leading-[18px]">04/16/2024</Fit></div>
      <div className="relative ml-[18px] mr-[12px] h-6 w-6 shrink-0">
        <svg viewBox="0 0 16 16" className="h-4 w-4"><path d="M0 0H16V12H12V16L7 12H0Z" fill="#fff" /><path d="M3 3.500H13M3 6H13M3 8.500H10" stroke="#20303f" strokeWidth="1.100" /></svg>
        <div className="absolute left-2 top-[8px] flex h-4 w-4 items-center justify-center rounded-full border border-[#9aa2a8] bg-[#2c3238] text-[11px]">3</div>
      </div>
      <div className="mr-[4px] h-10 w-px bg-[#5d6b79]" />
    </div>
  );
}

export default function App() {
  return (
    <div className="h-[1050px] w-[1680px] overflow-hidden bg-white font-['Open_Sans','Noto_Sans',sans-serif] text-black">
      <div className="flex h-6 items-center">
        <Cone c="ml-[3px] h-[17px] w-[14px]" />
        <Fit c="ml-[6px] h-5 w-[278px] text-[12px] leading-5">RPReplay_Final1693517975 2.mov - VLC media player</Fit>
        <div className="ml-auto flex items-center">
          <svg viewBox="0 0 10 10" className="h-[10px] w-[10px]"><path d="M0 5.500H10" stroke="#000" /></svg>
          <svg viewBox="0 0 10 10" className="ml-[35px] h-[10px] w-[10px]"><path d="M.5 2.500H7.500V9.500H.5ZM2.500 2.500V.5H9.500V7.500H7.500" fill="none" stroke="#000" /></svg>
          <svg viewBox="0 0 10 10" className="ml-[36px] mr-[20px] h-[10px] w-[10px]"><path d="M0 0L10 10M10 0L0 10" stroke="#000" /></svg>
        </div>
      </div>
      <div className="flex h-5 items-center pl-2 text-[12px] leading-5">
        <Fit c="w-[33px]">Media</Fit><Fit c="ml-4 w-[47px]">Playback</Fit><Fit c="ml-4 w-[32px]">Audio</Fit><Fit c="ml-4 w-[30px]">Video</Fit>
        <Fit c="ml-4 w-[41px]">Subtitle</Fit><Fit c="ml-[15px] w-[27px]">Tools</Fit><Fit c="ml-4 w-[25px]">View</Fit><Fit c="ml-4 w-[25px]">Help</Fit>
      </div>
      <Video />
      <VlcControls />
      <Taskbar />
    </div>
  );
}
